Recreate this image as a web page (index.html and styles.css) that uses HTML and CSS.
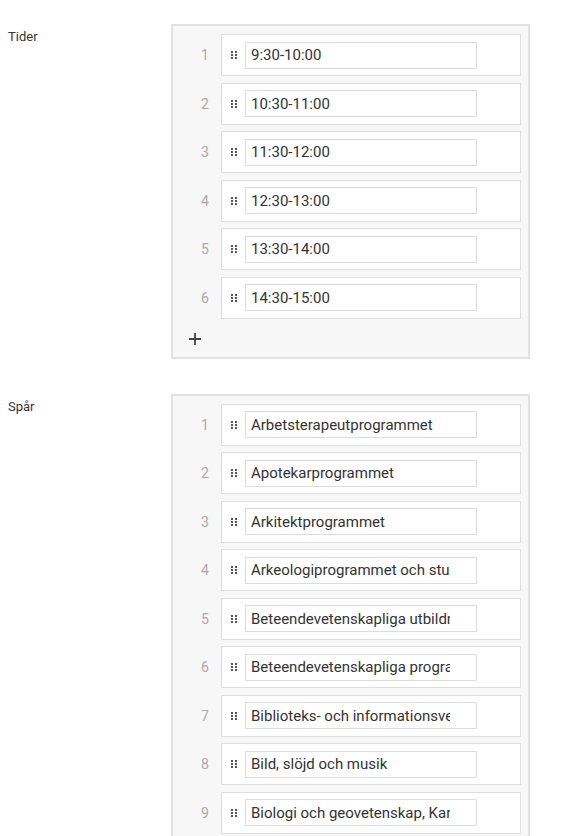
FILE: index.html
```html
<!DOCTYPE html>
<html lang="sv">

<head>
  <meta charset="UTF-8">
  <meta name="viewport" content="width=device-width, initial-scale=1.0">
  <title>Fält</title>
  <link rel="stylesheet" href="styles.css">
</head>

<body>
  <!-- drag handle, reused in each row -->
  <svg class="defs" width="0" height="0">
    <symbol id="dots" viewBox="0 0 6 8">
      <rect x="0" y="0" width="2" height="2"/><rect x="4" y="0" width="2" height="2"/>
      <rect x="0" y="3" width="2" height="2"/><rect x="4" y="3" width="2" height="2"/>
      <rect x="0" y="6" width="2" height="2"/><rect x="4" y="6" width="2" height="2"/>
    </symbol>
  </svg>

  <div class="field">
    <label class="field-label">Tider</label>
    <div class="list-box">
      <ol class="item-list">
        <li class="item"><span class="num">1</span><div class="row"><svg class="handle"><use href="#dots"/></svg><input type="text" value="9:30-10:00"></div></li>
        <li class="item"><span class="num">2</span><div class="row"><svg class="handle"><use href="#dots"/></svg><input type="text" value="10:30-11:00"></div></li>
        <li class="item"><span class="num">3</span><div class="row"><svg class="handle"><use href="#dots"/></svg><input type="text" value="11:30-12:00"></div></li>
        <li class="item"><span class="num">4</span><div class="row"><svg class="handle"><use href="#dots"/></svg><input type="text" value="12:30-13:00"></div></li>
        <li class="item"><span class="num">5</span><div class="row"><svg class="handle"><use href="#dots"/></svg><input type="text" value="13:30-14:00"></div></li>
        <li class="item"><span class="num">6</span><div class="row"><svg class="handle"><use href="#dots"/></svg><input type="text" value="14:30-15:00"></div></li>
      </ol>
      <button class="add-button" type="button">
        <svg width="12" height="12" viewBox="0 0 12 12"><path d="M6 0v12M0 6h12" stroke="#444" stroke-width="1.8"/></svg>
      </button>
    </div>
  </div>

  <div class="field">
    <label class="field-label">Spår</label>
    <div class="list-box">
      <ol class="item-list">
        <li class="item"><span class="num">1</span><div class="row"><svg class="handle"><use href="#dots"/></svg><input type="text" value="Arbetsterapeutprogrammet"></div></li>
        <li class="item"><span class="num">2</span><div class="row"><svg class="handle"><use href="#dots"/></svg><input type="text" value="Apotekarprogrammet"></div></li>
        <li class="item"><span class="num">3</span><div class="row"><svg class="handle"><use href="#dots"/></svg><input type="text" value="Arkitektprogrammet"></div></li>
        <li class="item"><span class="num">4</span><div class="row"><svg class="handle"><use href="#dots"/></svg><input type="text" value="Arkeologiprogrammet och studier"></div></li>
        <li class="item"><span class="num">5</span><div class="row"><svg class="handle"><use href="#dots"/></svg><input type="text" value="Beteendevetenskapliga utbildningar"></div></li>
        <li class="item"><span class="num">6</span><div class="row"><svg class="handle"><use href="#dots"/></svg><input type="text" value="Beteendevetenskapliga programmet"></div></li>
        <li class="item"><span class="num">7</span><div class="row"><svg class="handle"><use href="#dots"/></svg><input type="text" value="Biblioteks- och informationsvetenskap"></div></li>
        <li class="item"><span class="num">8</span><div class="row"><svg class="handle"><use href="#dots"/></svg><input type="text" value="Bild, slöjd och musik"></div></li>
        <li class="item"><span class="num">9</span><div class="row"><svg class="handle"><use href="#dots"/></svg><input type="text" value="Biologi och geovetenskap, Karlstad"></div></li>
      </ol>
    </div>
  </div>
</body>

</html>
```

FILE: styles.css
```css
body {
  margin: 0;
  padding: 24px 8px 0 8px;
  background-color: #fff;
  color: #333;
  font-family: Roboto, "Liberation Sans", sans-serif;
}

.defs {
  position: absolute;
}

.field {
  display: flex;
  align-items: flex-start;
  margin-bottom: 35px;
}

.field-label {
  width: 163px;
  padding-top: 5px;
  font-size: 13px;
  color: #333;
}

.list-box {
  width: 348px;
  border: 2px solid #e2e2e2;
  background-color: #f7f7f7;
  padding: 8px 7px 8px 0;
}

.item-list {
  list-style: none;
  margin: 0;
  padding: 0;
  display: flex;
  flex-direction: column;
  gap: 6.5px;
}

.item {
  display: flex;
  align-items: center;
}

.num {
  width: 32px;
  padding-left: 16px;
  text-align: center;
  font-size: 14px;
  color: #aaa;
}

.row {
  flex: 1;
  height: 40px;
  display: flex;
  align-items: center;
  background-color: #fff;
  border: 1px solid #dedede;
  padding-left: 9px;
}

.handle {
  width: 6px;
  height: 8px;
  margin-right: 8px;
  fill: #555;
}

.row input {
  width: 232px;
  height: 27px;
  box-sizing: border-box;
  border: 1px solid #dcdcdc;
  padding: 0 26px 0 5px;
  font-family: Roboto, "Liberation Sans", sans-serif;
  font-size: 15px;
  color: #333;
  outline: none;
}

.add-button {
  border: 0;
  background: none;
  padding: 0;
  margin: 14px 0 4px 16px;
  width: 12px;
  height: 12px;
  display: block;
}
```
